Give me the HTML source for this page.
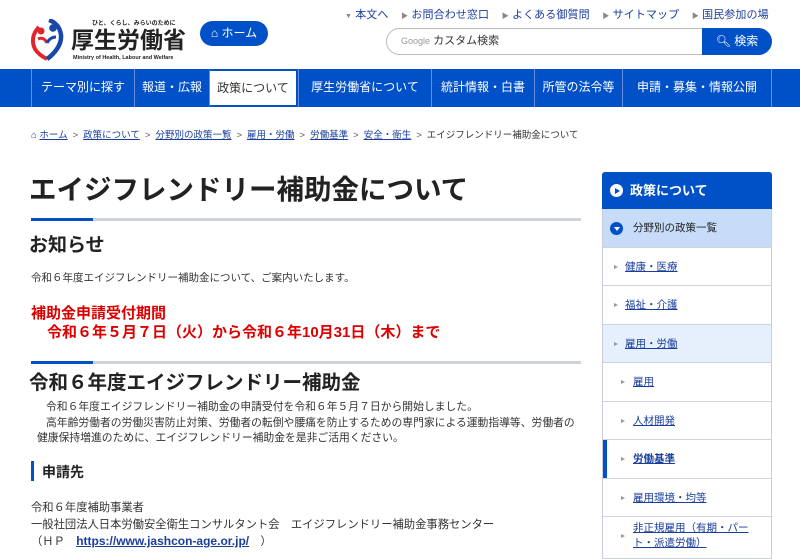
<!DOCTYPE html>
<html><head><meta charset="utf-8">
<style>
*{margin:0;padding:0;box-sizing:border-box}
body{width:800px;height:553px;overflow:hidden;background:#fff;font-family:"Liberation Sans","Noto Sans CJK JP",sans-serif;color:#333;position:relative}
.a{position:absolute;white-space:nowrap}
.nav{position:absolute;top:69px;left:0;width:800px;height:38px;background:#0050c8}
.ni{position:absolute;top:0;height:38px;line-height:37px;color:#fff;font-size:12px;text-align:center;border-left:1px solid #6a8fe0}
.ni.act{background:#fff;color:#333;border:2px solid #0050c8;border-left:1px solid #6a8fe0;line-height:34px}
.top a{color:#1a3e9c;text-decoration:none}
.bc{font-size:9.5px;color:#333}
.bc u{color:#1a3e9c}
.bc i{font-style:normal;color:#555;margin:0 5px}
.sb{position:absolute;left:602px;width:170px;border-left:1px solid #ccd;border-right:1px solid #ccd}
.row{height:38.5px;border-bottom:1px solid #cfd3dd;font-size:10.5px;color:#1a3e9c;position:relative;padding-left:22px;line-height:38px}
.row u{text-decoration:underline}
.row:before{content:"";position:absolute;left:11px;top:17px;border-left:4px solid #999;border-top:2.5px solid transparent;border-bottom:2.5px solid transparent}
.row.s{padding-left:30px}.row.s:before{left:18px}
</style></head><body>
<svg class="a" style="left:29px;top:19px" width="36" height="42" viewBox="0 0 36 42">
<path d="M10 8 C4 14 2 22 6 30 C9 35 14 38 18 40" fill="none" stroke="#e0262c" stroke-width="4"/>
<path d="M18 40 C25 35 33 26 32 16 C31 8 26 3 20 1" fill="none" stroke="#1947a8" stroke-width="4.5"/>
<path d="M9 20 C13 18 16 20 18 24" fill="none" stroke="#e0262c" stroke-width="3"/>
<path d="M18 24 C20 20 23 18 27 18" fill="none" stroke="#1947a8" stroke-width="3"/>
<circle cx="12" cy="12" r="3.5" fill="#e0262c"/><circle cx="24" cy="9" r="3.8" fill="#1947a8"/>
</svg>
<div class="a" style="left:92px;top:18px;font-size:6px;font-weight:bold;color:#222">ひと、くらし、みらいのために</div>
<div class="a" style="left:71px;top:26px;font-size:23px;font-weight:bold;color:#222;line-height:28px">厚生労働省</div>
<div class="a" style="left:73px;top:55px;font-size:5.5px;font-weight:bold;color:#222">Ministry of Health, Labour and Welfare</div>
<div class="a" style="left:200px;top:21px;width:68px;height:25px;background:#0050c8;border-radius:13px;color:#fff;font-size:12px;line-height:25px;text-align:center">⌂ ホーム</div>
<div class="a top" style="left:345px;top:6px;font-size:11px;color:#1a3e9c;letter-spacing:0.1px">
<span style="color:#888;font-size:7px">▼</span> <a>本文へ</a>&nbsp;&nbsp;&nbsp;&nbsp;<span style="color:#888;font-size:7px">▶</span> <a>お問合わせ窓口</a>&nbsp;&nbsp;&nbsp;&nbsp;<span style="color:#888;font-size:7px">▶</span> <a>よくある御質問</a>&nbsp;&nbsp;&nbsp;&nbsp;<span style="color:#888;font-size:7px">▶</span> <a>サイトマップ</a>&nbsp;&nbsp;&nbsp;&nbsp;<span style="color:#888;font-size:7px">▶</span> <a>国民参加の場</a></div>
<div class="a" style="left:386px;top:28px;width:318px;height:27px;border:1px solid #bbb;border-radius:14px 0 0 14px;font-size:11px;line-height:25px;padding-left:14px"><span style="color:#999;font-size:9px">Google</span> カスタム検索</div>
<div class="a" style="left:702px;top:28px;width:70px;height:27px;background:#0050c8;border-radius:0 14px 14px 0;color:#fff;font-size:12px;line-height:27px;text-align:center">🔍︎ 検索</div>
<div class="nav">
<div class="ni" style="left:31px;width:103px">テーマ別に探す</div>
<div class="ni" style="left:134px;width:75px">報道・広報</div>
<div class="ni act" style="left:209px;width:89px">政策について</div>
<div class="ni" style="left:298px;width:133px">厚生労働省について</div>
<div class="ni" style="left:431px;width:103px">統計情報・白書</div>
<div class="ni" style="left:534px;width:88px">所管の法令等</div>
<div class="ni" style="left:622px;width:149px">申請・募集・情報公開</div>
<div class="ni" style="left:771px;width:29px"></div>
</div>
<div class="a bc" style="left:31px;top:127px"><span style="color:#0050c8">⌂</span> <u>ホーム</u><i>&gt;</i><u>政策について</u><i>&gt;</i><u>分野別の政策一覧</u><i>&gt;</i><u>雇用・労働</u><i>&gt;</i><u>労働基準</u><i>&gt;</i><u>安全・衛生</u><i>&gt;</i>エイジフレンドリー補助金について</div>
<div class="a" style="left:29px;top:167px;font-size:27.5px;font-weight:bold;color:#222">エイジフレンドリー補助金について</div>
<div class="a" style="left:31px;top:218px;width:550px;height:3px;background:#cfd2da"></div>
<div class="a" style="left:31px;top:218px;width:62px;height:3px;background:#0050c8"></div>
<div class="a" style="left:29px;top:230px;font-size:19px;font-weight:bold;color:#222">お知らせ</div>
<div class="a" style="left:31px;top:270px;font-size:10.5px">令和６年度エイジフレンドリー補助金について、ご案内いたします。</div>
<div class="a" style="left:31px;top:302px;font-size:15px;font-weight:bold;color:#d00">補助金申請受付期間</div>
<div class="a" style="left:47px;top:321px;font-size:15px;font-weight:bold;color:#d00">令和６年５月７日（火）から令和６年10月31日（木）まで</div>
<div class="a" style="left:31px;top:361px;width:550px;height:3px;background:#cfd2da"></div>
<div class="a" style="left:31px;top:361px;width:62px;height:3px;background:#0050c8"></div>
<div class="a" style="left:29px;top:370px;font-size:19.5px;font-weight:bold;color:#222;line-height:26px">令和６年度エイジフレンドリー補助金</div>
<div class="a" style="left:31px;top:400px;font-size:10.8px;line-height:15.5px">&nbsp;&nbsp;&nbsp;&nbsp;&nbsp;令和６年度エイジフレンドリー補助金の申請受付を令和６年５月７日から開始しました。<br>&nbsp;&nbsp;&nbsp;&nbsp;&nbsp;高年齢労働者の労働災害防止対策、労働者の転倒や腰痛を防止するための専門家による運動指導等、労働者の<br>&nbsp;&nbsp;健康保持増進のために、エイジフレンドリー補助金を是非ご活用ください。</div>
<div class="a" style="left:31px;top:461px;width:3px;height:20px;background:#0050c8"></div>
<div class="a" style="left:42px;top:462px;font-size:14px;font-weight:bold;color:#222">申請先</div>
<div class="a" style="left:31px;top:500px;font-size:11.3px;line-height:16.5px">令和６年度補助事業者<br>一般社団法人日本労働安全衛生コンサルタント会　エイジフレンドリー補助金事務センター<br>（ＨＰ　<u style="color:#1a3e9c;font-weight:bold;font-size:12px">https://www.jashcon-age.or.jp/</u>　）</div>
<div class="a" style="left:602px;top:172px;width:170px;height:37px;background:#0050c8;border-radius:3px 3px 0 0;color:#fff;font-size:13px;font-weight:bold;line-height:37px;padding-left:28px">政策について</div>
<div class="a" style="left:610px;top:184px;width:13px;height:13px;border-radius:50%;background:#fff"></div>
<div class="a" style="left:615px;top:187.5px;border-left:5px solid #0050c8;border-top:3px solid transparent;border-bottom:3px solid transparent"></div>
<div class="sb" style="top:209px">
<div class="row" style="background:#c6dcf8;color:#222;padding-left:30px;border-left:none">分野別の政策一覧</div>
<div class="row"><u>健康・医療</u></div>
<div class="row"><u>福祉・介護</u></div>
<div class="row" style="background:#e6f0fc"><u>雇用・労働</u></div>
<div class="row s"><u>雇用</u></div>
<div class="row s"><u>人材開発</u></div>
<div class="row s" style="box-shadow:inset 4px 0 0 #0050c8;font-weight:bold"><u>労働基準</u></div>
<div class="row s"><u>雇用環境・均等</u></div>
<div class="row s" style="line-height:15px;padding-top:4px;height:42px"><u>非正規雇用（有期・パー<br>ト・派遣労働）</u></div>
</div>
<div class="a" style="left:610px;top:222px;width:13px;height:13px;border-radius:50%;background:#0050c8"></div>
<div class="a" style="left:613.5px;top:227px;border-top:4px solid #fff;border-left:3px solid transparent;border-right:3px solid transparent"></div>
</body></html>
